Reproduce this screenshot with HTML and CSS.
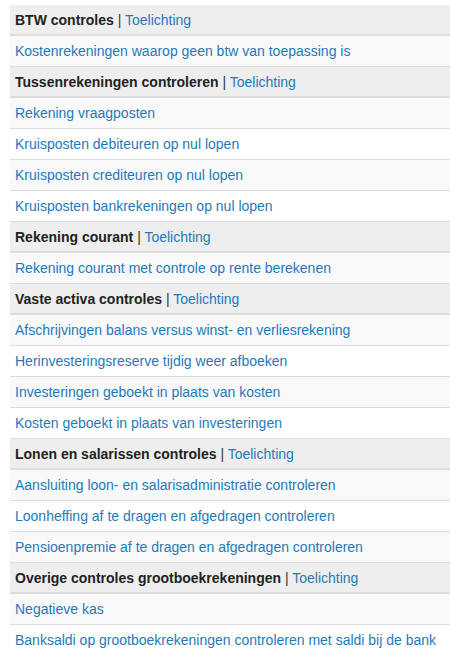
FILE: index.html
```html
<!DOCTYPE html>
<html lang="nl">
<head>
    <meta charset="UTF-8">
    <meta name="viewport" content="width=device-width, initial-scale=1.0">
    <title>Controles grootboekrekeningen</title>
    <link rel="stylesheet" href="styles.css">
</head>
<body>

    <table class="checks">
        <!-- BTW -->
        <tbody>
            <tr class="group"><th><strong>BTW controles</strong> | <a href="#">Toelichting</a></th></tr>
            <tr><td><a href="#">Kostenrekeningen waarop geen btw van toepassing is</a></td></tr>
        </tbody>

        <!-- Tussenrekeningen -->
        <tbody>
            <tr class="group"><th><strong>Tussenrekeningen controleren</strong> | <a href="#">Toelichting</a></th></tr>
            <tr><td><a href="#">Rekening vraagposten</a></td></tr>
            <tr><td><a href="#">Kruisposten debiteuren op nul lopen</a></td></tr>
            <tr><td><a href="#">Kruisposten crediteuren op nul lopen</a></td></tr>
            <tr><td><a href="#">Kruisposten bankrekeningen op nul lopen</a></td></tr>
        </tbody>

        <!-- Rekening courant -->
        <tbody>
            <tr class="group"><th><strong>Rekening courant</strong> | <a href="#">Toelichting</a></th></tr>
            <tr><td><a href="#">Rekening courant met controle op rente berekenen</a></td></tr>
        </tbody>

        <!-- Vaste activa -->
        <tbody>
            <tr class="group"><th><strong>Vaste activa controles</strong> | <a href="#">Toelichting</a></th></tr>
            <tr><td><a href="#">Afschrijvingen balans versus winst- en verliesrekening</a></td></tr>
            <tr><td><a href="#">Herinvesteringsreserve tijdig weer afboeken</a></td></tr>
            <tr><td><a href="#">Investeringen geboekt in plaats van kosten</a></td></tr>
            <tr><td><a href="#">Kosten geboekt in plaats van investeringen</a></td></tr>
        </tbody>

        <!-- Lonen -->
        <tbody>
            <tr class="group"><th><strong>Lonen en salarissen controles</strong> | <a href="#">Toelichting</a></th></tr>
            <tr><td><a href="#">Aansluiting loon- en salarisadministratie controleren</a></td></tr>
            <tr><td><a href="#">Loonheffing af te dragen en afgedragen controleren</a></td></tr>
            <tr><td><a href="#">Pensioenpremie af te dragen en afgedragen controleren</a></td></tr>
        </tbody>

        <!-- Overige -->
        <tbody>
            <tr class="group"><th><strong>Overige controles grootboekrekeningen</strong> | <a href="#">Toelichting</a></th></tr>
            <tr><td><a href="#">Negatieve kas</a></td></tr>
            <tr><td><a href="#">Banksaldi op grootboekrekeningen controleren met saldi bij de bank</a></td></tr>
        </tbody>
    </table>

</body>
</html>
```

FILE: styles.css
```css
body {
    font-family: "Liberation Sans", Arial, sans-serif;
    font-size: 14px;
    line-height: 20px;
    color: #333;
    background-color: #fff;
    margin: 0;
    padding: 5px 0 0 10px;
}

a {
    color: #1f7ab9;
    text-decoration: none;
}

.checks {
    width: 440px;
    border-collapse: collapse;
    border-spacing: 0;
}

.checks th,
.checks td {
    text-align: left;
    font-weight: normal;
    padding: 5px;
    border-top: 1px solid #ddd;
    white-space: nowrap;
}

.checks tbody:first-child .group th {
    border-top: 0;
}

/* section header rows */
.checks .group th {
    background-color: #eee;
    border-bottom: 2px solid #ddd;
    padding-bottom: 4px;
}

.checks .group strong {
    font-weight: bold;
    color: #222;
}

/* striping per section */
.checks tr:nth-child(even) td {
    background-color: #f9f9f9;
}

.checks .group + tr td {
    border-top: 0;
}
```
